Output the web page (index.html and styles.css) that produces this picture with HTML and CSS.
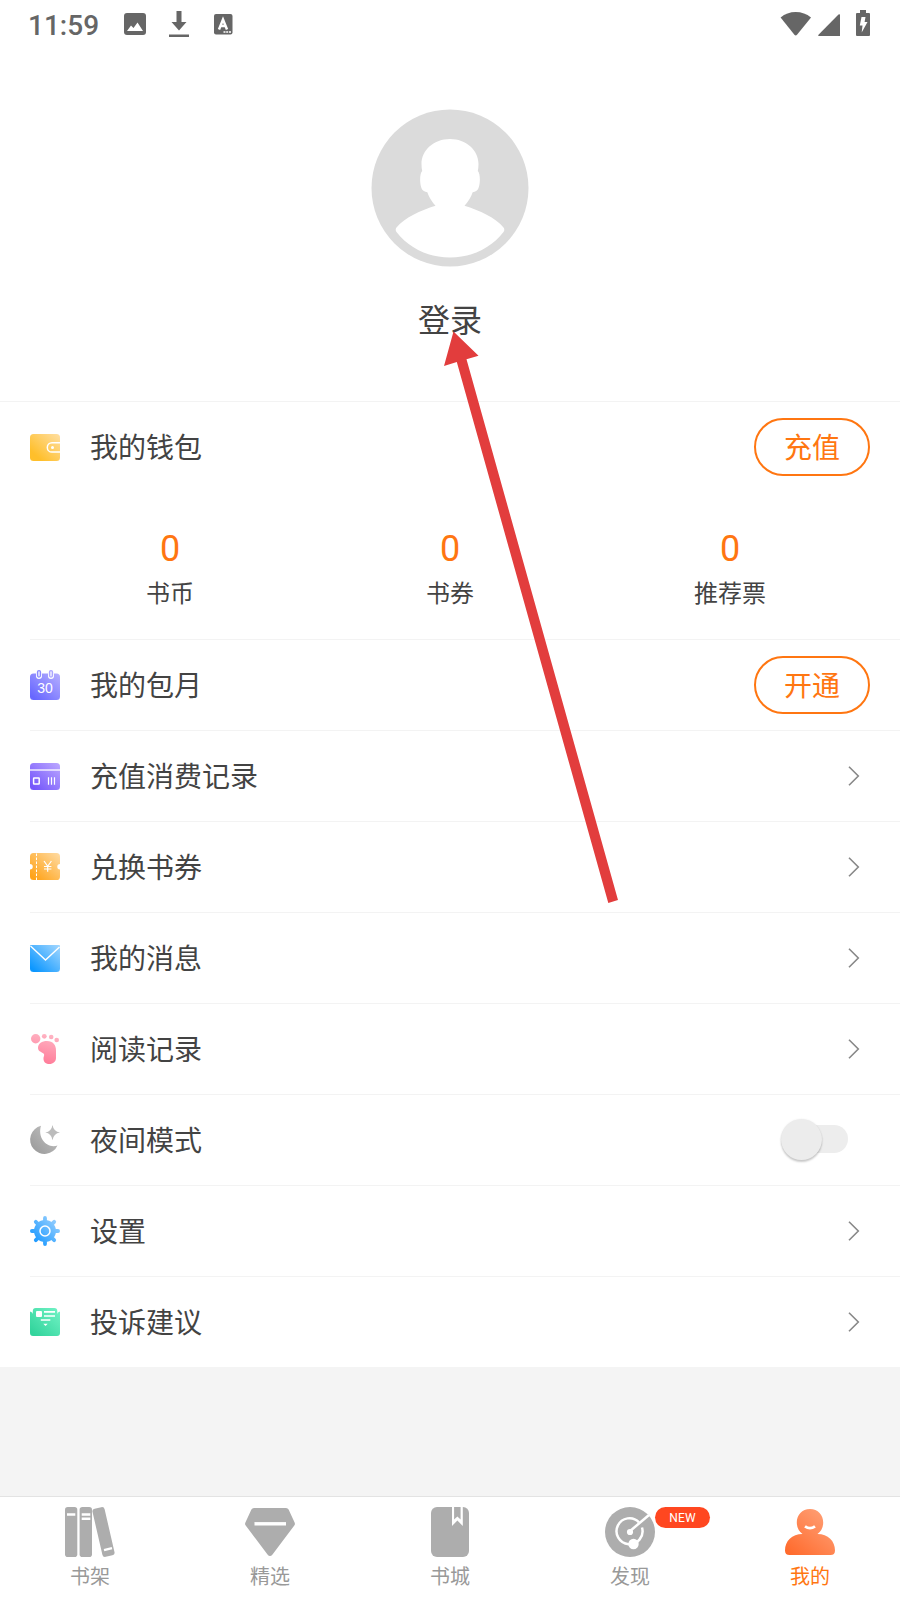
FILE: index.html
```html
<!DOCTYPE html>
<html lang="zh-CN">
<head>
<meta charset="utf-8">
<title>我的</title>
<link rel="stylesheet" href="styles.css">
</head>
<body>
<div class="screen">
  <header class="status">
    <span class="time">11:59</span>
    <svg class="st-image" width="22" height="22" viewBox="0 0 22 22"><rect width="22" height="22" rx="3" fill="#666"/><path d="M3 18 7 12.5l2.5 2.5 4-5.500L19 18z" fill="#fff"/></svg>
    <svg class="st-down" width="20" height="26" viewBox="0 0 20 26"><path d="M7.500 0h5v11h5L10 19.500 2.500 11h5zM0 23.500h20V26H0z" fill="#666"/></svg>
    <svg class="st-a" width="19" height="21" viewBox="0 0 19 21"><rect width="18.500" height="20.500" rx="2" fill="#666"/><path d="M5 15.500 9 5.500l4 10M6.500 12h5" stroke="#fff" stroke-width="2.500" fill="none"/><path d="M9.500 18h2m.7 0h2m.8 0h2" stroke="#fff" stroke-width="1.700"/></svg>
    <svg class="st-wifi" width="32" height="24" viewBox="0 0 32 24"><path d="M.6 5.500Q7 0 15.700 0T31 5.500L17 22.700q-1.300 1.500-2.600 0z" fill="#666"/></svg>
    <svg class="st-signal" width="22" height="22" viewBox="0 0 22 22"><path d="M22 1v21H1Q-.5 22 .5 20.800L20.500.6Q22-.5 22 1z" fill="#666"/></svg>
    <svg class="st-battery" width="14" height="26" viewBox="0 0 14 26"><path d="M4 0h6v3h3q1 0 1 1v21q0 1-1 1H1q-1 0-1-1V4q0-1 1-1h3z" fill="#666"/><path d="M5.500 7H9.500L8.600 12H11.500L5.700 22.500 6.500 15.500H3.800z" fill="#fff"/></svg>
  </header>

  <section class="profile">
    <svg class="avatar" width="158" height="158" viewBox="0 0 158 158">
      <circle cx="79" cy="79" r="78.500" fill="#dbdbdb"/>
      <path d="M79 30C63 30 50.500 41 50.500 55q0 4 .7 7C48 65 48.500 80 52.800 82q1.500 1 3.500 1.300Q59 91 64.500 96.700C50 101 33 109 25.500 118.500q-1.600 2.200 0 4.500C37 138 56 148.500 79 148.500S121 138 132.500 123q1.600-2.300 0-4.500C125 109 108 101 93.500 96.700Q99 91 101.700 83.300q2-.3 3.500-1.300C109.500 80 110 65 106.800 62q.7-3 .7-7C107.500 41 95 30 79 30z" fill="#fff"/>
    </svg>
    <div class="login">登录</div>
  </section>

  <main class="menu">
    <section class="wallet">
      <div class="row">
        <svg class="icon" viewBox="0 0 30 30"><defs><linearGradient id="gold" x1="0" y1="1" x2="1" y2="0"><stop offset=".2" stop-color="#ffbf2b"/><stop offset="1" stop-color="#ffdfa3"/></linearGradient></defs><rect y="2" width="30" height="27" rx="3.500" fill="url(#gold)"/><path d="M30 10.700h-8a4.700 4.700 0 0 0 0 9.400h8" fill="none" stroke="#fff" stroke-width="1.500"/><circle cx="22.500" cy="15.400" r="1.500" fill="#fff"/></svg>
        <span class="label">我的钱包</span><button class="pill">充值</button>
      </div>
      <div class="stats">
        <div class="stat"><b class="num">0</b><span class="unit">书币</span></div>
        <div class="stat"><b class="num">0</b><span class="unit">书券</span></div>
        <div class="stat"><b class="num">0</b><span class="unit">推荐票</span></div>
      </div>
    </section>
    <div class="row line">
      <svg class="icon" viewBox="0 0 30 30"><defs><linearGradient id="indigo" x1="0" y1="1" x2="1" y2="0"><stop offset=".1" stop-color="#6767ff"/><stop offset="1" stop-color="#b6afff"/></linearGradient></defs><rect y="3.500" width="30" height="26.500" rx="3.500" fill="url(#indigo)"/><path d="M6 2h6v4q0 3-3 3T6 6zM18 2h6v4q0 3-3 3t-3-3z" fill="#fff"/><rect x="7.500" y=".6" width="3" height="6.500" rx="1.500" fill="#e4e3ff" stroke="#8c8bff" stroke-width="1.300"/><rect x="19.500" y=".6" width="3" height="6.500" rx="1.500" fill="#e9e7ff" stroke="#aaa5ff" stroke-width="1.300"/><text x="15" y="23" class="cal-day">30</text></svg>
      <span class="label">我的包月</span><button class="pill">开通</button>
    </div>
    <div class="row line">
      <svg class="icon" viewBox="0 0 30 30"><defs><linearGradient id="violet" x1="0" y1="1" x2="1" y2="0"><stop offset=".1" stop-color="#7557fb"/><stop offset="1" stop-color="#bca8ff"/></linearGradient></defs><rect y="2" width="30" height="27" rx="3.500" fill="url(#violet)"/><path d="M0 9h30" stroke="#fff" stroke-width="1.300"/><rect x="3.600" y="17" width="5.600" height="6" rx=".5" fill="none" stroke="#fff" stroke-width="1.500"/><path d="M18.500 16.300v7.400m3-7.400v7.400m3-7.400v7.400" stroke="#fff" stroke-width="1.200"/></svg>
      <span class="label">充值消费记录</span><svg class="chev" viewBox="0 0 12 20"><path d="M1 .7 10.300 10 1 19.300"/></svg>
    </div>
    <div class="row line">
      <svg class="icon" viewBox="0 0 30 30"><defs><linearGradient id="orange" x1="0" y1="1" x2="1" y2="0"><stop offset=".1" stop-color="#ffa319"/><stop offset="1" stop-color="#ffdca5"/></linearGradient></defs><path d="M3.500 1h23Q30 1 30 4.500V12a2.700 2.700 0 0 0 0 5.400v7Q30 28 26.500 28h-23Q0 28 0 24.500v-7A2.700 2.700 0 0 0 0 12V4.500Q0 1 3.500 1z" fill="url(#orange)"/><path d="M6.500 1.500V28" stroke="#fff" stroke-dasharray="2.600 1.400"/><path d="M14 9l3.700 5.300L21.400 9M17.700 14.300v5.500M14 14.500h7.400M14 17h7.400" fill="none" stroke="#fff" stroke-width="1.200"/></svg>
      <span class="label">兑换书券</span><svg class="chev" viewBox="0 0 12 20"><path d="M1 .7 10.300 10 1 19.300"/></svg>
    </div>
    <div class="row line">
      <svg class="icon" viewBox="0 0 30 30"><defs><linearGradient id="blue" x1="0" y1="1" x2="1" y2="0"><stop offset=".1" stop-color="#0c97ff"/><stop offset="1" stop-color="#a3d7ff"/></linearGradient></defs><path d="M0 3Q0 2 1 2h28q1 0 1 1v22.500q0 3.500-3.500 3.500h-23Q0 29 0 25.500z" fill="url(#blue)"/><path d="M.5 3 15.500 17 29.500 4" fill="none" stroke="#fff" stroke-width="1.400"/></svg>
      <span class="label">我的消息</span><svg class="chev" viewBox="0 0 12 20"><path d="M1 .7 10.300 10 1 19.300"/></svg>
    </div>
    <div class="row line">
      <svg class="icon" viewBox="0 0 30 30"><defs><linearGradient id="pink" gradientUnits="userSpaceOnUse" x1="14" y1="30" x2="22" y2="0"><stop offset="0" stop-color="#ff7b98"/><stop offset="1" stop-color="#ffb6c5"/></linearGradient></defs><g fill="url(#pink)"><circle cx="5.700" cy="4.700" r="4.700"/><circle cx="14.300" cy="2.300" r="2.400"/><circle cx="21.200" cy="3" r="2.300"/><circle cx="26.700" cy="6" r="2.300"/><path d="M8 14C8 9.500 12 7 17 7c6 0 9 4 9 9.500V24c0 3.500-3 6-6.500 6s-6-2-6-5 1-3 .5-5C13.300 18.300 8 18 8 14z"/></g></svg>
      <span class="label">阅读记录</span><svg class="chev" viewBox="0 0 12 20"><path d="M1 .7 10.300 10 1 19.300"/></svg>
    </div>
    <div class="row line">
      <svg class="icon" viewBox="0 0 30 30"><defs><linearGradient id="gray" x1="0" y1="1" x2="1" y2="0"><stop offset=".1" stop-color="#9c9c9c"/><stop offset="1" stop-color="#c5c5c5"/></linearGradient></defs><path d="M11 .8A14.300 14.300 0 1 0 27.500 20.500C18 24 7 14 11 .8z" fill="url(#gray)"/><path d="M22.500 0q1 6.500 7.500 7.500-6.500 1-7.500 7.700-1-6.700-7.200-7.700Q21.500 6.500 22.500 0z" fill="#bcbcbc"/></svg>
      <span class="label">夜间模式</span><span class="toggle"><i class="thumb"></i></span>
    </div>
    <div class="row line">
      <svg class="icon" viewBox="0 0 30 30"><defs><linearGradient id="sky" gradientUnits="userSpaceOnUse" x1="4" y1="26" x2="26" y2="4"><stop offset="0" stop-color="#1998ff"/><stop offset="1" stop-color="#94ceff"/></linearGradient></defs><g fill="none" stroke="url(#sky)" stroke-width="3.800" stroke-linecap="round"><path d="M15 1.900l.01 26.200M1.900 15l26.200.01M5.800 5.800 24.200 24.200M24.200 5.800 5.800 24.200"/></g><circle cx="15" cy="15" r="11" fill="url(#sky)"/><circle cx="15" cy="15" r="5" fill="none" stroke="#fff" stroke-width="1.500"/></svg>
      <span class="label">设置</span><svg class="chev" viewBox="0 0 12 20"><path d="M1 .7 10.300 10 1 19.300"/></svg>
    </div>
    <div class="row">
      <svg class="icon" viewBox="0 0 30 30"><defs><linearGradient id="green" x1="0" y1="1" x2="1" y2="0"><stop offset=".1" stop-color="#32d49c"/><stop offset="1" stop-color="#73f3c6"/></linearGradient></defs><path d="M0 4.500Q2.800 5 2.800 7V4Q2.800 1 5.800 1h18.500q3 0 3 3v3q0-2 2.700-2.500V26q0 3-3 3H3q-3 0-3-3z" fill="url(#green)"/><rect x="6" y="4" width="6" height="6" rx="1" fill="#fff"/><path d="M14 4.800h11M14 9h11M10.800 13h9.500" stroke="#fff" stroke-width="1.700"/><path d="M13.300 16.800h4.400l-2.200 2.200z" fill="#fff"/></svg>
      <span class="label">投诉建议</span><svg class="chev" viewBox="0 0 12 20"><path d="M1 .7 10.300 10 1 19.300"/></svg>
    </div>
  </main>

  <nav class="tabs">
    <a class="tab"><svg class="tab-icon" viewBox="0 0 50 50"><rect width="12.300" height="50" rx="2.800"/><rect x="14.600" width="12.400" height="50" rx="2.800"/><rect x="-6.200" y="-24.700" width="12.400" height="49.400" rx="2.800" transform="translate(38.500 25) rotate(-13)"/><path d="M2 7.500h8.300M16.700 7.500h8.600M16.700 11.800h8.600M39 43.200l8-2" stroke="#fff" stroke-width="2.400"/></svg>书架</a>
    <a class="tab"><svg class="tab-icon" viewBox="0 0 50 50"><path d="M9 1h32q1.800 0 2.600 1.600l6 13q.8 1.600-.3 3L27.500 47.500q-2.500 3-5 0L.7 18.600q-1.100-1.400-.3-3l6-13Q7.200 1 9 1z"/><path d="M9.500 16.800h31.500" stroke="#fff" stroke-width="3.400"/></svg>精选</a>
    <a class="tab"><svg class="tab-icon" viewBox="0 0 50 50"><rect x="6" width="38" height="50" rx="6"/><path d="M27 0h10.800v19L32.400 13.500 27 19z" fill="#fff"/><path d="M29.100 0h6.500v12.500L32.400 9.600l-3.300 2.900z"/></svg>书城</a>
    <a class="tab"><svg class="tab-icon" viewBox="0 0 50 50"><circle cx="25" cy="25" r="25"/><path d="M34 15.300A13 13 0 1 0 37 20.500" fill="none" stroke="#fff" stroke-width="2.500"/><path d="M24.500 24.500 44 8" stroke="#fff" stroke-width="2.500"/><circle cx="25" cy="25" r="3.100" fill="#fff"/><circle cx="28.500" cy="37" r="5.200" fill="#fff"/></svg>发现<span class="badge">NEW</span></a>
    <a class="tab active"><svg class="tab-icon" viewBox="0 0 50 50"><defs><linearGradient id="me" gradientUnits="userSpaceOnUse" x1="5" y1="48" x2="38" y2="8"><stop offset="0" stop-color="#ff6a2c"/><stop offset="1" stop-color="#ff9b6f"/></linearGradient></defs><path d="M25 2C17 2 11.800 8 11.800 15.500q0 7.200 5.700 11.500C7 27 0 34 0 43.500q0 4.500 4.500 4.500h41q4.500 0 4.500-4.500C50 34 43 27 32.500 27q5.700-4.300 5.700-11.500C38.200 8 33 2 25 2z" fill="url(#me)"/><path d="M20 19.300q5 3.700 10 0" fill="none" stroke="#fff" stroke-width="2.800"/></svg>我的</a>
  </nav>

  <svg class="arrow" width="180" height="574" viewBox="444 331 180 574"><path d="M453.500 331.500 478.500 355.700 466.500 359.300 618 900 608.300 903 456.800 362 444 366z" fill="#e23d3d"/></svg>
</div>
</body>
</html>
```
FILE: styles.css
```css
* { box-sizing: border-box; }
body { margin: 0; background: #fff; font-family: "Noto Sans CJK SC", sans-serif; color: #434343; }
.screen { position: relative; width: 900px; height: 1600px; display: flex; flex-direction: column; background: #f4f4f4; overflow: hidden; }

.status { height: 50px; flex: none; display: flex; align-items: flex-start; padding: 0 30px 0 28px; background: #fff; }
.status svg { flex: none; display: block; }
.time { width: 96px; padding-top: 1px; font: 500 28px/50px Roboto, sans-serif; color: #666; }
.st-image { margin-top: 13px; }
.st-down { margin: 11px 0 0 23px; }
.st-a { margin: 14px 0 0 25px; }
.st-wifi { margin: 12px 0 0 auto; }
.st-signal { margin: 14px 0 0 6px; }
.st-battery { margin: 10px 0 0 16px; }

.profile { height: 352px; flex: none; display: flex; flex-direction: column; align-items: center; padding-top: 59px; background: #fff; border-bottom: 1px solid #f3f3f3; }
.avatar { flex: none; display: block; }
.login { margin-top: 27px; font-size: 32px; line-height: 48px; }

.menu { flex: none; background: #fff; }
.wallet, .line { position: relative; }
.wallet { height: 238px; }
.wallet::after, .line::after { content: ""; position: absolute; left: 30px; right: 0; bottom: 0; height: 1px; background: #f3f3f3; }
.row { height: 90px; display: flex; align-items: center; padding: 0 30px; }
.row.line { height: 91px; padding-bottom: 1px; }
.icon { width: 30px; height: 30px; flex: none; margin-right: 30px; display: block; overflow: visible; }
.cal-day { font: 14px "Liberation Sans", Arial, sans-serif; fill: #fff; text-anchor: middle; }
.label { flex: 1; font-size: 28px; line-height: 40px; padding-bottom: 2px; }
.pill { width: 116px; height: 58px; padding: 0 0 2px; border: 2px solid #ff7611; border-radius: 29px; background: #fff; color: #ff7611; font: 28px/52px "Noto Sans CJK SC", sans-serif; }
.chev { width: 12px; height: 20px; margin-right: 10px; fill: none; stroke: #888; stroke-width: 1.6; }
.toggle { width: 66px; height: 28px; margin: 0 22px 2px 0; border-radius: 14px; background: #ededed; display: flex; align-items: center; }
.thumb { flex: none; width: 41px; height: 41px; margin-left: -1px; border-radius: 50%; background: #ececec; box-shadow: 0 2px 2px rgba(0,0,0,.2), 0 0 2px rgba(0,0,0,.08); }

.stats { display: grid; grid-template-columns: repeat(3, 1fr); padding: 35px 30px 0; text-align: center; }
.stat { display: flex; flex-direction: column; }
.num { font: 36px/44px Roboto, sans-serif; color: #ff7611; }
.unit { margin-top: 3px; font-size: 24px; line-height: 36px; }

.tabs { margin-top: auto; height: 104px; flex: none; display: grid; grid-template-columns: repeat(5, 1fr); background: #fff; border-top: 1px solid #e3e3e3; }
.tab { position: relative; display: flex; flex-direction: column; align-items: center; padding-top: 10px; font-size: 20px; line-height: 38px; color: #999; }
.tab.active { color: #ff7611; }
.tab-icon { width: 50px; height: 50px; flex: none; fill: #adadad; }
.badge { position: absolute; left: 115px; top: 10px; width: 55px; height: 21px; border-radius: 11px; background: #ff4720; color: #fff; font: 12px/22px Roboto, sans-serif; letter-spacing: .2px; text-align: center; }

.arrow { position: absolute; left: 444px; top: 331px; }
```
